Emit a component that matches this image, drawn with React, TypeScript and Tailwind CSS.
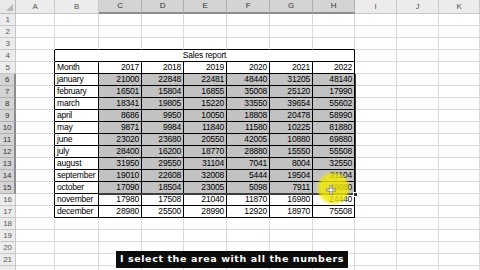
const COLS = ['A', 'B', 'C', 'D', 'E', 'F', 'G', 'H', 'I', 'J', 'K'];

const DATA: [string, number[]][] = [
  ['january', [21000, 22848, 22481, 48440, 31205, 48140]],
  ['february', [16501, 15804, 16855, 35008, 25120, 17990]],
  ['march', [18341, 19805, 15220, 33550, 39654, 55602]],
  ['april', [8686, 9950, 10050, 18808, 20478, 58990]],
  ['may', [9871, 9984, 11840, 11580, 10225, 81880]],
  ['june', [23020, 23680, 20550, 42005, 10880, 69880]],
  ['july', [28400, 16200, 18770, 28880, 15550, 55508]],
  ['august', [31950, 29550, 31104, 7041, 8004, 32550]],
  ['september', [19010, 22608, 32008, 5444, 19504, 21104]],
  ['october', [17090, 18504, 23005, 5098, 7911, 49880]],
  ['november', [17980, 17508, 21040, 11870, 16980, 24440]],
  ['december', [28980, 25500, 28990, 12920, 18970, 75508]],
];

const YEARS = ['2017', '2018', '2019', '2020', '2021', '2022'];

// row number -> cell text for columns A..K
function cellText(row: number, col: number): string {
  if (row === 5) {
    if (col === 1) return 'Month';
    if (col >= 2 && col <= 7) return YEARS[col - 2];
  }
  if (row >= 6 && row <= 17) {
    const [m, vals] = DATA[row - 6];
    if (col === 1) return m;
    if (col >= 2 && col <= 7) return String(vals[col - 2]);
  }
  return '';
}

export default function App() {
  const rows = Array.from({ length: 22 }, (_, i) => i + 1);
  return (
    <div className="relative h-[270px] w-[480px] overflow-hidden bg-white font-['Liberation_Sans',Arial,sans-serif] text-[8.5px] tracking-[-0.2px] text-black">
      <div className="grid grid-cols-[16px_39px_44px_43px_42px_43px_43px_43px_42px_42px_42px_41px] grid-rows-[14px] auto-rows-[12px]">
        {/* header row */}
        <div className="relative border-b border-r border-[#bdbdbd] bg-[#e9e9e9]">
          <svg className="absolute bottom-[2px] right-[2px]" width="7" height="7" viewBox="0 0 7 7">
            <path d="M7 0 L7 7 L0 7 Z" fill="#b8b8b8" />
          </svg>
        </div>
        {COLS.map((c, i) => (
          <div
            key={c}
            className={
              i >= 2 && i <= 7
                ? 'flex items-center justify-center border-b-2 border-r border-b-[#8c8c8c] border-r-[#b0b0b0] bg-[#d4d4d4] text-[8px] text-[#333]'
                : 'flex items-center justify-center border-b border-r border-[#c8c8c8] bg-[#ececec] text-[8px] text-[#555]'
            }
          >
            {c}
          </div>
        ))}

        {rows.map((r) => (
          <Row key={r} r={r} />
        ))}
      </div>

      {/* selection outline + fill handle */}
      <div className="absolute left-[99px] top-[74px] h-[121px] w-[257px] border-b-2 border-r border-[#3d3d3d]" />
      <div className="absolute left-[353px] top-[192px] h-[5px] w-[5px] border border-white bg-[#2d2d2d]" />

      {/* cursor highlight */}
      <div className="absolute left-[318px] top-[173px] h-[31px] w-[31px] rounded-full bg-[#f2ea00]/80 blur-[1.5px]" />
      <svg className="absolute left-[326px] top-[185px]" width="10" height="10" viewBox="0 0 10 10">
        <path d="M4 0h2v4h4v2H6v4H4V6H0V4h4z" fill="#fff" stroke="#444" strokeWidth="0.6" />
      </svg>

      {/* subtitle */}
      <div className="absolute left-[116px] top-[251px] flex h-[17px] w-[232px] items-center justify-center whitespace-nowrap bg-[#0c0c0c] font-['DejaVu_Sans',sans-serif] text-[9.5px] font-bold tracking-[0.6px] text-white">
        I select the area with all the numbers
      </div>
    </div>
  );
}

function Row({ r }: { r: number }) {
  const selectedRow = r >= 6 && r <= 15;
  return (
    <>
      <div
        className={
          selectedRow
            ? 'flex items-center justify-center border-b border-r-2 border-b-[#b0b0b0] border-r-[#8c8c8c] bg-[#d4d4d4] text-[8px] text-[#333]'
            : 'flex items-center justify-center border-b border-r border-[#c8c8c8] bg-[#ececec] text-[8px] text-[#555]'
        }
      >
        {r < 22 ? r : ''}
      </div>
      {r === 4 ? (
        <>
          <Cell r={r} c={0} />
          <div className="col-span-7 flex items-center justify-center border-b border-r border-black leading-none">
            Sales report
          </div>
          {[8, 9, 10].map((c) => (
            <Cell key={c} r={r} c={c} />
          ))}
        </>
      ) : (
        COLS.map((_, c) => <Cell key={c} r={r} c={c} />)
      )}
    </>
  );
}

function Cell({ r, c }: { r: number; c: number }) {
  const inTable = r >= 4 && r <= 17 && c >= 1 && c <= 7;
  const rightBlack = r >= 4 && r <= 17 && c >= 0 && c <= 7;
  const bottomBlack = r >= 3 && r <= 17 && c >= 1 && c <= 7;
  const selected = r >= 6 && r <= 15 && c >= 2 && c <= 7;
  const text = cellText(r, c);
  const numeric = c >= 2;

  const bg = selected ? 'bg-[#c2c2c2]' : 'bg-white';
  const rb = rightBlack ? 'border-r-black' : 'border-r-[#dadada]';
  const bb = bottomBlack ? 'border-b-black' : 'border-b-[#dadada]';
  const align = numeric ? 'justify-end pr-[2px]' : 'justify-start pl-[2px]';

  return (
    <div className={`flex items-center overflow-hidden whitespace-nowrap border-b border-r leading-none ${bg} ${rb} ${bb} ${align}`}>
      {inTable ? text : ''}
    </div>
  );
}
